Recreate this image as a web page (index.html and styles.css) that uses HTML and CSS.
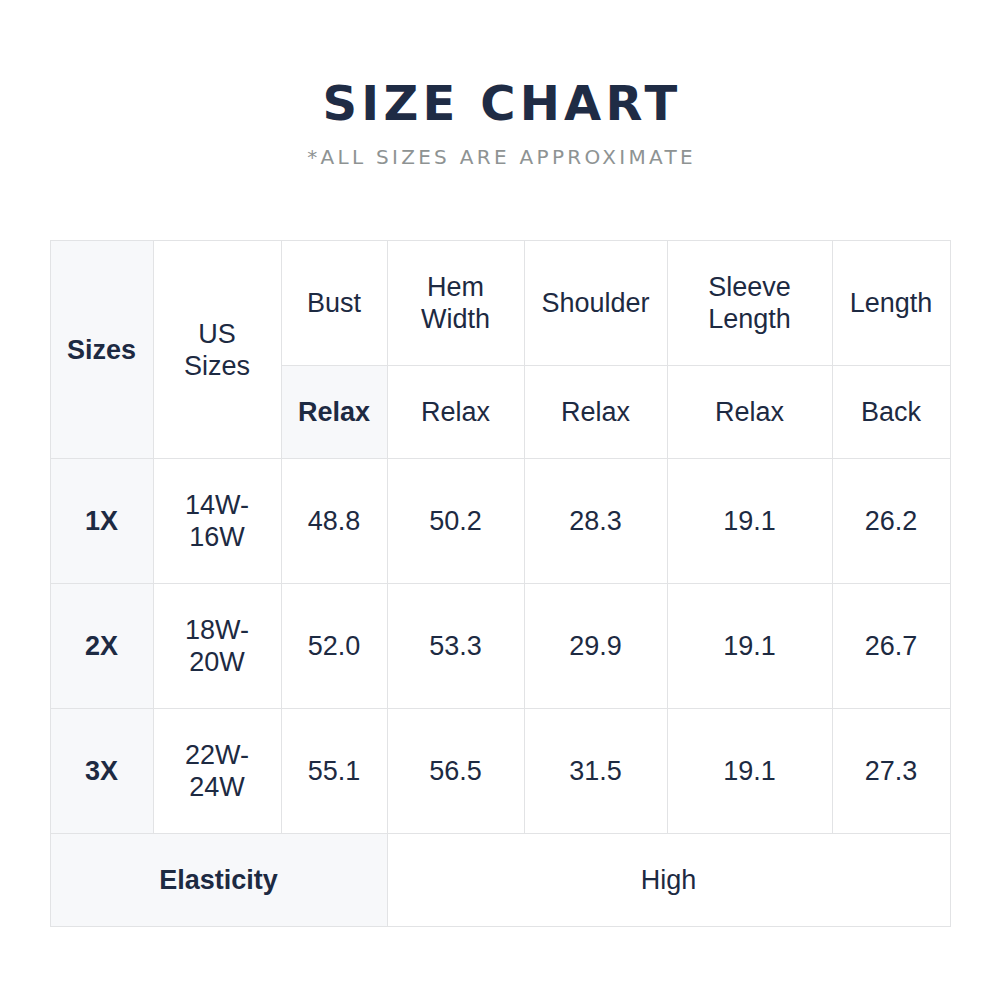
FILE: index.html
```html
<!DOCTYPE html>
<html>
<head>
<meta charset="utf-8">
<link rel="stylesheet" href="styles.css">
</head>
<body>
<div class="page">
  <h1 class="title">SIZE CHART</h1>
  <p class="subtitle">*ALL SIZES ARE APPROXIMATE</p>
  <table class="chart">
    <colgroup>
      <col class="c1"><col class="c2"><col class="c3"><col class="c4"><col class="c5"><col class="c6"><col class="c7">
    </colgroup>
    <tr class="r-head">
      <th rowspan="2" class="shade bold">Sizes</th>
      <td rowspan="2">US<br>Sizes</td>
      <td>Bust</td>
      <td>Hem<br>Width</td>
      <td>Shoulder</td>
      <td>Sleeve<br>Length</td>
      <td>Length</td>
    </tr>
    <tr class="r-sub">
      <td class="shade bold">Relax</td>
      <td>Relax</td>
      <td>Relax</td>
      <td>Relax</td>
      <td>Back</td>
    </tr>
    <tr class="r-data">
      <th class="shade bold">1X</th>
      <td>14W-<br>16W</td>
      <td>48.8</td><td>50.2</td><td>28.3</td><td>19.1</td><td>26.2</td>
    </tr>
    <tr class="r-data">
      <th class="shade bold">2X</th>
      <td>18W-<br>20W</td>
      <td>52.0</td><td>53.3</td><td>29.9</td><td>19.1</td><td>26.7</td>
    </tr>
    <tr class="r-data">
      <th class="shade bold">3X</th>
      <td>22W-<br>24W</td>
      <td>55.1</td><td>56.5</td><td>31.5</td><td>19.1</td><td>27.3</td>
    </tr>
    <tr class="r-sub">
      <th colspan="3" class="shade bold">Elasticity</th>
      <td colspan="4">High</td>
    </tr>
  </table>
</div>
</body>
</html>
```
FILE: styles.css
```css
html, body {
  margin: 0;
  padding: 0;
  background: #ffffff;
}
.page {
  width: 1000px;
  height: 1000px;
  display: flex;
  flex-direction: column;
  align-items: center;
  color: #1d2a42;
}
.title {
  margin: 76px 0 0 0;
  font-family: "DejaVu Sans", sans-serif;
  font-weight: bold;
  font-size: 48px;
  line-height: 54px;
  letter-spacing: 4.2px;
  padding-left: 4px;
  color: #1f2c45;
}
.subtitle {
  margin: 14px 0 0 0;
  font-family: "DejaVu Sans", sans-serif;
  font-weight: normal;
  font-size: 20px;
  line-height: 26px;
  letter-spacing: 3.3px;
  padding-left: 3px;
  color: #8e9393;
}
.chart {
  margin-top: 70px;
  border-collapse: collapse;
  table-layout: fixed;
  width: 900px;
  font-family: "Liberation Sans", Arial, sans-serif;
  font-size: 27px;
  line-height: 32px;
  color: #1d2a42;
}
.c1 { width: 103px; }
.c2 { width: 128px; }
.c3 { width: 106px; }
.c4 { width: 137px; }
.c5 { width: 143px; }
.c6 { width: 165px; }
.c7 { width: 118px; }
.chart th, .chart td {
  border: 1px solid #e2e3e5;
  text-align: center;
  vertical-align: middle;
  padding: 0;
  font-weight: normal;
}
.chart .bold { font-weight: bold; }
.chart .shade { background: #f7f8fa; }
.r-head { height: 125px; }
.r-sub { height: 93px; }
.r-data { height: 125px; }
```
